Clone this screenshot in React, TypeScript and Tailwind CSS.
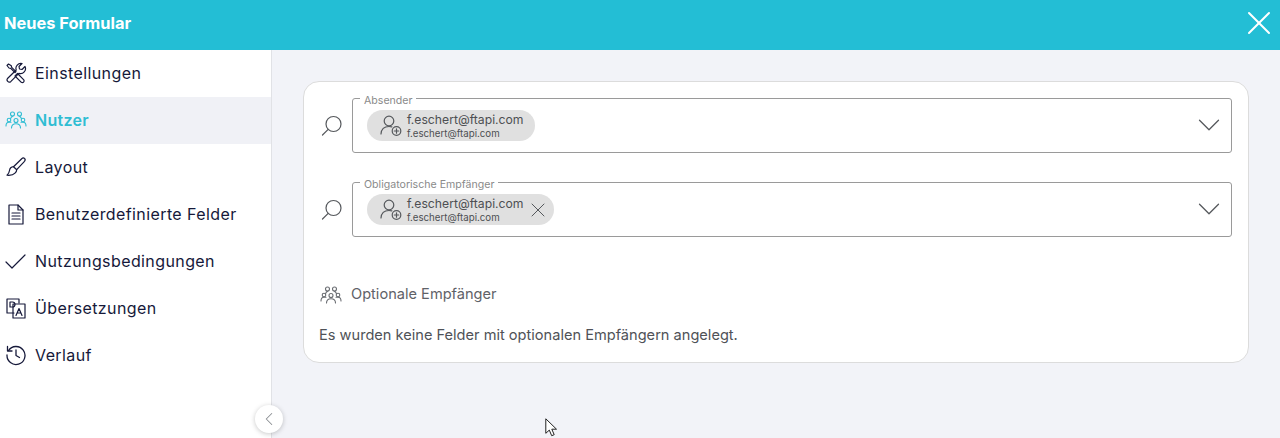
import React from 'react';
import { ChevronDown, ChevronLeft, X } from 'lucide-react';

const Tools = () => (
  <svg width="22" height="22" viewBox="0 0 22 22" fill="none" stroke="currentColor" strokeWidth="1.200" strokeLinejoin="round" strokeLinecap="round">
    <path d="M2 3.500 3.500 2l2.800 1.800.4 1.600 4.300 4.300-1 1L5.700 6.400 4 6z" />
    <path d="M12.500 11.500l6.300 6.300a1.800 1.800 0 0 1-2.500 2.500L10 14z" />
    <path d="M20 4.500l-3 3-2.500-.500-.500-2.500 3-3a5 5 0 0 0-5.800 6.500L2.500 16.500a2.300 2.300 0 0 0 3.200 3.200l8.200-8.300A5 5 0 0 0 20 4.500z" />
  </svg>
);

const Users = ({ size = 22 }: { size?: number }) => (
  <svg width={size} height={size} viewBox="0 0 22 22" fill="none" stroke="currentColor" strokeWidth="1.100" strokeLinecap="round">
    <circle cx="7.500" cy="5" r="2" />
    <circle cx="14.500" cy="5" r="2" />
    <circle cx="11" cy="11.500" r="2" />
    <circle cx="4" cy="11" r="1.800" />
    <circle cx="18" cy="11" r="1.800" />
    <path d="M1 17c0-2.500 1-3.700 3-3.700h2M21 17c0-2.500-1-3.700-3-3.700h-2M6.500 19c0-2.500 1.500-4.300 4.500-4.300s4.500 1.800 4.500 4.300" />
    <path d="M5.500 10c.3-1.600 1-2.400 2-2.600M16.500 10c-.3-1.600-1-2.400-2-2.600" />
  </svg>
);

const Brush = () => (
  <svg width="22" height="22" viewBox="0 0 22 22" fill="none" stroke="currentColor" strokeWidth="1.200" strokeLinejoin="round" strokeLinecap="round">
    <path d="M19.500 2.500c1 .8.800 1.800 0 2.800l-7.800 8.400-3.200-3 8.200-8c1-.9 2-1 2.800-.2z" />
    <path d="M8.500 10.700c-2.500.3-3.700 1.800-4 3.800-.2 1.700-1 3.300-2.500 4.700 3.500.3 6.300-.2 8-2 1.200-1.200 1.700-2.200 1.700-3.500" />
  </svg>
);

const Doc = () => (
  <svg width="22" height="22" viewBox="0 0 22 22" fill="none" stroke="currentColor" strokeWidth="1.200" strokeLinejoin="round" strokeLinecap="round">
    <path d="M4 2h9l5 5v14H4z" />
    <path d="M13 2v5h5M7 10h8M7 13h8M7 16h8" />
  </svg>
);

const Tick = () => (
  <svg width="22" height="22" viewBox="0 0 22 22" fill="none" stroke="currentColor" strokeWidth="1.200" strokeLinecap="round" strokeLinejoin="round">
    <path d="M1 12l6 6L20 5" />
  </svg>
);

const Translate = () => (
  <svg width="22" height="22" viewBox="0 0 22 22" fill="none" stroke="currentColor" strokeWidth="1.200" strokeLinejoin="round" strokeLinecap="round">
    <path d="M14 6V2H2v14h7" />
    <path d="M8 7h12v14H8z" />
    <path d="M5 5h2.500a2.500 2.500 0 0 1 0 5H5zM11 18.500l3-7 3 7M12.200 16h3.600" />
  </svg>
);

const History = () => (
  <svg width="22" height="22" viewBox="0 0 22 22" fill="none" stroke="currentColor" strokeWidth="1.300" strokeLinejoin="round" strokeLinecap="round">
    <path d="M3.500 6.500A9 9 0 1 1 2 11" />
    <path d="M2.500 2.500v4.500H7M11 6v5.500l3.500 2" />
  </svg>
);

const UserAdd = () => (
  <svg width="24" height="24" viewBox="0 0 24 24" fill="none" stroke="#55585c" strokeWidth="1.200" strokeLinecap="round">
    <circle cx="10" cy="7" r="4.800" />
    <path d="M2 20c.3-4.800 2.800-7.500 8-7.500 1 0 2 .1 2.800.4" />
    <circle cx="17.500" cy="17" r="4.300" />
    <path d="M17.500 14.800v4.400M15.300 17h4.400" />
  </svg>
);

const Lens = () => (
  <svg width="24" height="24" viewBox="0 0 24 24" fill="none" stroke="#55585c" strokeWidth="1.200" strokeLinecap="round" className="ml-[16px] mr-[8px] mt-[8px]">
    <circle cx="13.500" cy="9" r="7.500" />
    <path d="M8.200 14.300 2.500 20" />
  </svg>
);

const navItems = [
  { label: 'Einstellungen', icon: <Tools /> },
  { label: 'Nutzer', icon: <Users />, active: true },
  { label: 'Layout', icon: <Brush /> },
  { label: 'Benutzerdefinierte Felder', icon: <Doc /> },
  { label: 'Nutzungsbedingungen', icon: <Tick /> },
  { label: 'Übersetzungen', icon: <Translate /> },
  { label: 'Verlauf', icon: <History /> },
];

const Field = ({ legend, removable }: { legend: string; removable?: boolean }) => (
  <div className="flex items-center">
    <Lens />
    <fieldset className="flex-1 h-[61px] border border-[#9a9a9a] rounded-[3px] pl-[14px] pr-[10px] flex items-start justify-between">
      <legend className="-ml-[7px] px-[4px] text-[10.600px] leading-[13px] text-[#8a8a8a]">
        <span className="block translate-y-[2px]">{legend}</span>
      </legend>
      <div className={removable ? 'flex items-center h-[31px] mt-[5px] bg-[#e0e0e0] rounded-full pl-[12px] pr-[4px] gap-[4px]' : 'flex items-center h-[31px] mt-[5px] bg-[#e0e0e0] rounded-full pl-[12px] pr-[11px] gap-[4px]'}>
        <UserAdd />
        <div className="flex flex-col text-[#4d4f52]">
          <span className="text-[12.200px] leading-[15px] font-normal">f.eschert@ftapi.com</span>
          <span className="text-[9.700px] leading-[13px]">f.eschert@ftapi.com</span>
        </div>
        {removable && <X size={24} strokeWidth={1} className="text-[#55585c] -ml-[2px]" />}
      </div>
      <ChevronDown size={38} strokeWidth={0.800} className="text-[#55585c] mt-[1px] -mr-[7px]" />
    </fieldset>
  </div>
);

export default function App() {
  return (
    <div className="relative w-[1280px] h-[438px] overflow-hidden flex flex-col bg-[#f2f3f8] font-['Inter',sans-serif]">
      <header className="h-[50px] shrink-0 bg-[#23bed5] flex items-center justify-between pl-[4px] pr-[1px] text-white">
        <h1 className="text-[16.400px] font-bold mb-[3px]">Neues Formular</h1>
        <X size={40} strokeWidth={1.200} className="mb-[4px]" />
      </header>
      <div className="flex flex-1 min-h-0">
        <aside className="w-[272px] shrink-0 bg-white border-r border-[#e1e2e6]">
          {navItems.map((item) => (
            <div
              key={item.label}
              className={
                item.active
                  ? 'h-[47px] flex items-center gap-[8px] pl-[5px] pb-[1px] bg-[#f0f1f6] text-[#2fbdd3] text-[16px] tracking-[0.280px] font-semibold'
                  : 'h-[47px] flex items-center gap-[8px] pl-[5px] pb-[1px] text-[#16193a] text-[16px] tracking-[0.400px] font-normal'
              }
            >
              <span className="w-[22px] flex justify-center">{item.icon}</span>
              <span>{item.label}</span>
            </div>
          ))}
        </aside>
        <main className="flex-1 pl-[31px] pr-[31px] pt-[31px]">
          <div className="h-[282px] bg-white border border-[#dcdcdc] rounded-[16px] pt-[10px] pr-[16px]">
            <div className="flex flex-col gap-[23px]">
              <Field legend="Absender" />
              <Field legend="Obligatorische Empfänger" removable />
            </div>
            <div className="flex items-center gap-[9px] ml-[16px] mt-[47px] text-[#5f6268] text-[14.600px]">
              <span className="text-[#6a6d72]"><Users /></span>
              <span>Optionale Empfänger</span>
            </div>
            <p className="ml-[15px] mt-[19px] text-[14.600px] leading-[20px] text-[#4f5257]">
              Es wurden keine Felder mit optionalen Empfängern angelegt.
            </p>
          </div>
        </main>
      </div>
      <button className="absolute left-[255px] top-[405px] w-[28px] h-[28px] rounded-full bg-white shadow-[0_1px_5px_rgba(0,0,0,0.22)] flex items-center justify-center text-[#8a8d92]">
        <ChevronLeft size={22} strokeWidth={1.100} />
      </button>
      <svg className="absolute left-[545px] top-[418px]" width="14" height="20" viewBox="0 0 14 20" fill="#fff" stroke="#222" strokeWidth="1">
        <path d="M.8.800v14.500l3.500-3.200 2.400 5.600 2.500-1-2.400-5.500h4.700z" />
      </svg>
    </div>
  );
}
